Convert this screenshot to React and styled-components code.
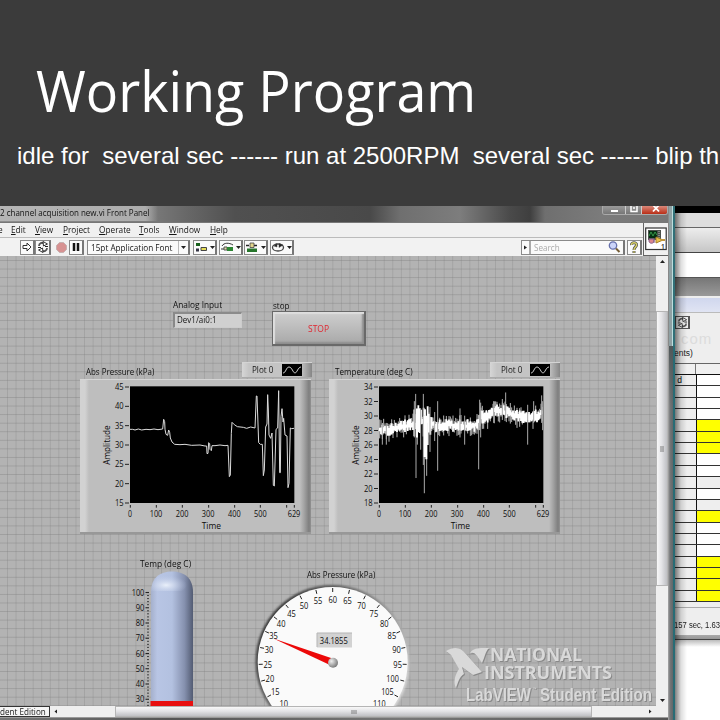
import React from "react";
import styled, { createGlobalStyle, css } from "styled-components";

const Global = createGlobalStyle`
  *, *::before, *::after { box-sizing: border-box; }
  body { margin: 0; background: #3b3b3b; font-family: "Open Sans", "Noto Sans", sans-serif; }
`;
const UI = '"Open Sans", "Noto Sans", sans-serif';

/* ---------- slide ---------- */
const Slide = styled.main`
  width: 720px; height: 720px; overflow: hidden;
  display: grid; grid-template-rows: 206px 514px;
`;
const Header = styled.header`
  background: #3b3b3b; color: #fff; padding: 51px 0 0 17px; overflow: hidden;
`;
const Title = styled.h1`
  margin: 0 0 0 19px; font: 400 57px/78px "Open Sans", sans-serif;
  width: max-content; transform: scaleX(0.945); transform-origin: left;
`;
const Subtitle = styled.p`
  margin: 12px 0 0; font: 24px/30px "Liberation Sans", Arial, sans-serif; white-space: pre; letter-spacing: -0.01px;
`;
const Desktop = styled.section`
  display: grid; grid-template-columns: 675px 45px; background: #fff; min-width: 0;
`;

/* ---------- window frame ---------- */
const Window = styled.section`
  display: grid; grid-template: 17px 33px 450px 11px 3px / 656px 12px 7px; color: #161616; overflow: hidden;
`;
const TitleBar = styled.div`
  grid-column: 1 / 3; display: flex; justify-content: space-between; overflow: hidden;
  background: linear-gradient(90deg, #8d8d8d 0, #7b7b7b 150px, #666 190px, #505050 235px, #494949 370px, #6f6f6f 400px, #7d7d7d 460px, #4a4a4a 510px, #3f3f3f 530px, #6f6f6f 545px, #7b7b7b 600px, #777);
  border-bottom: 1px solid #777;
`;
const Squeeze = styled.span`
  display: inline-block; white-space: pre; transform: scaleX(${(p) => p.$x || 0.88}); transform-origin: left;
`;
const WinTitle = styled.div`
  width: 158px; height: 15px; white-space: nowrap; font: 9px/14px ${UI}; color: #111;
  background: linear-gradient(90deg, #b5b5b5, #acacac 92%, transparent);
`;
const Captions = styled.div`
  display: grid; grid-template-columns: 23px 16px 29px; width: 66px; height: 9px; margin-right: 0;
  border: 1px solid #aaa; border-top: 0; border-radius: 0 0 3px 3px; overflow: hidden;
`;
const Caption = styled.span`
  display: flex; justify-content: center; align-items: flex-start; border-right: 1px solid #ccc;
  background: ${(p) => (p.$close ? "linear-gradient(#d9887a, #b92d16)" : "linear-gradient(#9a9a9a, #777)")};
`;
const FrameRight = styled.div`
  grid-column: 3; grid-row: 1 / 6;
  background:
    linear-gradient(90deg, #888 1px, #8ea0a3 1px 4px, #bdd 4px 5px, #306f77 5px) 0 0 / 100% 140px no-repeat,
    linear-gradient(transparent 140px, #50585a 140px, transparent 200px) 1px 0 / 4px 100% no-repeat,
    linear-gradient(90deg, #a8a8a8 0, #747678 2px, #5f6668 5px, #286c75 5px);
`;
const FrameBottom = styled.div`
  grid-column: 1 / 3; grid-row: 5; background: linear-gradient(90deg, #777, #555 25%, #777 60%, #555);
  border-top: 1px solid #999;
`;
const Bars = styled.div`
  grid-column: 1 / 3; display: grid; grid-template-columns: 643px 25px; grid-template-rows: 15px 18px;
  background: #f0f0f0; border-bottom: 1px solid #626262;
`;
const MenuBar = styled.nav`
  display: grid; grid-template-columns: 11px 24px 28px 36px 40px 30px 41px 40px; font: 9px/14px ${UI};
  border-bottom: 1px solid #bbb; overflow: hidden;
`;
const MenuItem = styled.span`white-space: nowrap; margin-left: ${(p) => (p.$first ? -2 : 0)}px;`;
const ToolBar = styled.div`
  grid-row: 2; display: flex; align-items: center; padding-left: 20px; background: #f2f2f2;
`;
const Tool = styled.div`
  flex: none; height: 15px; width: ${(p) => p.$w}px; margin-left: ${(p) => p.$gap || 0}px;
  display: flex; align-items: center; justify-content: center; gap: 2px; overflow: hidden;
  ${(p) => !p.$flat && css`border: 1px solid #8a8a8a; border-right: 2px solid #777; background: #fafafa;`}
  ${(p) => p.$start && css`justify-content: flex-start; padding-left: 3px;`}
  font: 9px/13px ${UI};
`;
const FontName = styled.span`width: 88px; height: 13px; border-right: 1px solid #bbb; flex: none;`;
const SearchKnob = styled.span`width: 7px; height: 13px; border-right: 2px solid #aaa; display: flex; align-items: center; flex: none; margin-left: -1px;`;
const SearchText = styled.span`color: #aaa; width: 73px; flex: none; padding-left: 1px;`;
const ViIcon = styled.div`
  grid-column: 2; grid-row: 1 / 3; border-left: 1px solid #666; padding: 4px 1px 4px 1px;
`;

/* ---------- scroll bars ---------- */
const VScroll = styled.div`
  grid-column: 2; grid-row: 3; background: #efefef; display: grid; grid-template-rows: 55px 275px 1fr;
  justify-items: center;
`;
const HScroll = styled.div`
  grid-column: 1 / 3; grid-row: 4; background: #efefef; display: grid; overflow: hidden;
  grid-template-columns: 50px 65px 477px 1fr; align-items: center;
`;
const Thumb = styled.div`
  width: 100%; height: 100%; border: 1px solid #b5b5b5; display: flex; justify-content: center; align-items: center;
  background: linear-gradient(${(p) => (p.$v ? "90deg" : "180deg")}, #f8f8f8, #e4e4e7 45%, #bfc0c4);
`;
const Edition = styled.div`
  height: 11px; border: 1px solid #333; border-left: 0; background: #f5f5f5; font: 9px/9px ${UI}; overflow: hidden; white-space: nowrap;
`;
const ArrowSlot = styled.div`
  display: flex; width: 100%; height: 100%; padding: ${(p) => p.$pad || "0"};
  justify-content: ${(p) => p.$j || "center"}; align-items: ${(p) => p.$a || "center"};
`;

/* ---------- front panel: controls are placed freely on its canvas ---------- */
const Panel = styled.div`
  grid-column: 1; grid-row: 3; position: relative; overflow: hidden;
  background-color: #b3b3b3;
  background-image: linear-gradient(90deg, rgba(130,130,130,.32) 1px, transparent 1px),
    linear-gradient(rgba(125,125,125,.38) 1px, transparent 1px);
  background-size: 8.57px 8.57px; background-position: 7px 4px;
`;
const Placed = styled.div`
  position: absolute; left: ${(p) => p.$l}px; top: ${(p) => p.$t}px;
`;
const Label = styled(Placed)`
  font: 9px/12px ${UI}; white-space: nowrap; color: #111;
`;
const Field = styled(Placed)`
  width: 69px; height: 16px; background: #d0d0d0; font: 9px/12px ${UI}; padding: 0 0 0 2px;
  border: 1px solid #999; border-top: 2px solid #8b8b8b; border-left: 2px solid #888; border-bottom-color: #ccc; border-right-color: #ccc;
`;
const StopButton = styled.button`
  position: absolute; left: 272px; top: 55px; width: 94px; height: 35px; padding: 2px 0 0 2px;
  border: 1px solid #696969; border-right-width: 2px; border-bottom-width: 2px; color: #e02630;
  background: linear-gradient(#cfcfcf, #b4b4b4 70%, #a8a8a8);
  box-shadow: inset 2px 2px 1px #dedede, inset -2px -2px 2px #8d8d8d; font: 9px/12px ${UI};
`;
const Legend = styled(Placed)`
  width: 70px; height: 16px; display: flex; align-items: center; justify-content: flex-end; gap: 6px; padding-right: 10px;
  background: linear-gradient(90deg, #d6d6d6, #c4c4c4 10%, #c4c4c4 84%, #868686); font: 9px/12px ${UI};
  border-top: 1px solid #d4d4d4; border-bottom: 1px solid #aaa;
`;
const Graph = styled(Placed)`
  width: 231px; height: 155px;
  background: linear-gradient(90deg, #d2d2d2, #d2d2d2 5px, #bebebe 9px, #bebebe 220px, #a4a4a4 224px, #7e7e7e 229px, #929292);
  border-top: 1px solid #d5d5d5; border-bottom: 2px solid #989898;
`;
const Art = styled.svg`display: block; flex: none; overflow: hidden; font-family: ${UI};`;

const T = ({ x, y, w, s = 26, children, ...r }) => (
  <text x={x} y={y} fontSize={s} textAnchor="middle" textLength={w} lengthAdjust="spacingAndGlyphs" fill="#0c0c0c" fontWeight="500" {...r}>{children}</text>
);

/* pressure trace, in plot units (0..492 across, 0..348 down) */
const pressure = "0,128 8,128 15,130 25,127 35,130 48,128 60,129 72,127 84,129 98,127 101,98 104,105 105,128 108,143 113,146 116,130 119,137 121,154 126,166 134,173 150,174 165,173 185,176 210,175 225,178 230,178 231,201 234,200 236,168 239,171 240,188 244,192 246,177 255,177 270,175 285,177 294,176 298,270 301,265 304,140 306,107 313,114 322,120 340,122 350,125 362,121 375,124 379,28 381,28 386,168 391,173 397,173 400,267 403,250 407,121 411,112 413,24 415,70 417,145 422,155 426,139 430,296 433,298 438,128 443,124 446,12 449,258 451,258 453,90 456,66 459,106 461,95 465,145 471,148 474,303 477,290 481,124 485,126 492,125";

/* temperature trace: a noisy band with occasional long spikes */
const centre = [[0, 28.2], [30, 28.1], [60, 28.5], [90, 28.6], [105, 29], [110, 29.6], [155, 29], [175, 28.5], [200, 28.8], [250, 28.5], [297, 28.7], [306, 29.8], [330, 30], [348, 30.8], [375, 30.6], [410, 30], [450, 29.6], [480, 30.1], [492, 30.5]];
const at = (x) => {
  let i = 1;
  while (i < centre.length - 1 && centre[i][0] < x) i += 1;
  const [a, b] = [centre[i - 1], centre[i]];
  return a[1] + ((b[1] - a[1]) * (x - a[0])) / (b[0] - a[0]);
};
const vy = (v) => 348 - (v - 18) * 21.75;
function band() {
  let seed = 17;
  const rnd = () => ((seed = (seed * 16807) % 2147483647) / 2147483647);
  let core = "", thin = "";
  for (let x = 2; x < 491; x += 4) {
    const c = at(x);
    const burst = (x > 105 && x < 127) ? [1.7, 1.7] : (x > 130 && x < 162) ? [1.9, 2.2] : [0.62, 0.62];
    core += `M${x} ${vy(c + burst[0] * (0.25 + rnd() * 1.25))}V${vy(c - burst[1] * (0.25 + rnd() * 1.25))}`;
    const up = rnd() ** 2, down = rnd() ** 2;
    thin += `M${x} ${vy(c + 0.5 + up * 1.1)}V${vy(c - 0.5 - down * 1.3)}`;
  }
  return { core, thin };
}
const temp = band();
const spikes = [[10, 29, 26], [22, 29, 26], [106, 32, 27], [110, 33, 29], [111, 29, 21.4], [115, 31, 26], [125, 31, 25.3], [133, 33, 23.2], [136, 30, 19.3], [143, 29, 21.7], [153, 31.2, 25], [167, 30.5, 26.5], [176, 32, 22.4], [243, 31, 27], [257, 30, 26], [299, 29, 22.6], [302, 32.2, 28], [305, 31.8, 27], [344, 32, 29], [370, 32.3, 30], [380, 33.2, 30], [446, 31.5, 26], [464, 32, 29], [488, 32.8, 29], [491, 32, 28]];

function Plot({ yTicks, children }) {
  const step = 348 / (yTicks.length - 1);
  return (
    <Art width="231" height="152" viewBox="30 75 693 456">
      <rect x="180" y="94" width="493" height="350" fill="#000" />
      <svg x="180" y="95" width="492" height="348" viewBox="0 0 492 348">{children}</svg>
      {yTicks.map((v, i) => (
        <g key={v}>
          <path d={`M165 ${96 + i * step}h12`} stroke="#222" strokeWidth="3" />
          <T x={148} y={105 + i * step} w={26}>{v}</T>
        </g>
      ))}
      {[0, 78, 156, 235, 313, 390, 469, 492].map((x) => (
        <path key={x} d={`M${181 + x} 450v8`} stroke="#222" strokeWidth="3" />
      ))}
      <T x={180} y={485} w={12}>0</T>
      {[100, 200, 300, 400, 500].map((v, i) => <T key={v} x={258 + i * 78.3} y={485} w={38}>{v}</T>)}
      <T x={672} y={485} w={38}>629</T>
      <T x={424} y={521} w={58}>Time</T>
      <T x={0} y={0} w={118} transform="translate(119 270) rotate(-90)">Amplitude</T>
    </Art>
  );
}

function PlotLegend({ l }) {
  return (
    <Legend $l={l} $t={106}>
      <Squeeze $x={0.9}>Plot 0</Squeeze>
      <Art width="20" height="12" viewBox="0 0 20 12">
        <rect width="20" height="12" fill="#000" />
        <path d="M1 9C4 9 4 3 7 3S11 9 13 9S16 3 19 3" fill="none" stroke="#ccc" />
      </Art>
    </Legend>
  );
}

function Thermometer() {
  return (
    <Art width="70" height="142" viewBox="130 564 70 142">
      <defs>
        <linearGradient id="tube"><stop offset="0" stopColor="#a5b0cc" /><stop offset=".15" stopColor="#b8c5e4" /><stop offset=".5" stopColor="#b3c1e0" /><stop offset=".8" stopColor="#8590ae" /><stop offset="1" stopColor="#525b72" /></linearGradient>
        <radialGradient id="dome" cx=".36" cy=".7" r=".5"><stop offset="0" stopColor="#eaf0fa" /><stop offset="1" stopColor="#c0cce8" stopOpacity="0" /></radialGradient>
      </defs>
      <path d="M151 706V592C151 578 160 571.500 172 571.500S193 578 193 592V706Z" fill="url(#tube)" />
      <path d="M151 591C151 578 160 571.500 172 571.500S193 578 193 591Z" fill="url(#dome)" />
      <rect x="150.500" y="701" width="42.500" height="5" fill="#e80f0f" />
      {[100, 90, 80, 70, 60, 50, 40, 30].map((v, i) => (
        <T key={v} s={8.6} x={v === 100 ? 138 : 140} y={595.5 + i * 15.25} w={v === 100 ? 12.5 : 8.6}>{v}</T>
      ))}
      {Array.from({ length: 38 }, (_, i) => (
        <path key={i} d={`M${i % 5 ? 147 : 145.5} ${592.5 + i * 3.05}H149`} stroke="#222" strokeWidth={i % 5 ? 0.8 : 1.1} />
      ))}
    </Art>
  );
}

function Gauge() {
  const values = Array.from({ length: 23 }, (_, i) => 5 + i * 5);
  return (
    <Art width="170" height="132" viewBox="248 574 170 132">
      <defs>
        <linearGradient id="rim" x1="0" y1=".1" x2="1" y2=".75"><stop offset="0" stopColor="#222" /><stop offset=".45" stopColor="#777" /><stop offset=".75" stopColor="#aaa" /><stop offset="1" stopColor="#e8e8e8" /></linearGradient>
        <filter id="soft"><feGaussianBlur stdDeviation=".8" /></filter>
        <radialGradient id="hub" cx=".35" cy=".35" r=".7"><stop offset="0" stopColor="#eee" /><stop offset="1" stopColor="#777" /></radialGradient>
      </defs>
      <circle cx="332.500" cy="662" r="77" fill="url(#rim)" filter="url(#soft)" />
      <circle cx="332.700" cy="662" r="75" fill="#fafafa" />
      {values.map((v) => {
        const a = (((v - 60) / 5) * 13.12 * Math.PI) / 180;
        const s = Math.sin(a), c = Math.cos(a);
        return (
          <g key={v}>
            <path d={`M${332.7 + s * 74} ${662 - c * 74}L${332.7 + s * 70} ${662 - c * 70}`} stroke="#222" />
            <T s={8.8} x={332.7 + s * (v > 99 ? 62 : 65)} y={665.5 - c * 63} w={v > 99 ? 12.5 : v < 10 ? 4 : 8.6}>{v}</T>
          </g>
        );
      })}
      <rect x="317" y="633" width="35" height="14.500" fill="#d2d2d2" />
      <path d="M317 647V633H352" stroke="#b5b5b5" fill="none" />
      <T s={9} x={333.8} y={644.3} w={28}>34.1855</T>
      <path d="M273.500 638.500L334 659L331 665.500Z" fill="#ec0808" />
      <circle cx="333" cy="662.700" r="5" fill="url(#hub)" />
    </Art>
  );
}

function NiLogo() {
  return (
    <Art width="209" height="60" viewBox="0 -1 209 60" fill="#d9d9d9">
      <g filter="drop-shadow(1px 1px 0.5px #888)">
        <path d="M0 4C8-1 15 0 20 7L36 25 27 28 16 20 18 27C13 30 12 36 10 41C7 35 9 28 13 22L5 8Z" />
        <path d="M24 6C28 0 35 1 43 1C39 5 39 10 36 16L31 9C29 6 27 5 24 6Z" />
        <text x="44" y="13.500" fontSize="17.500" fontWeight="700" textLength="92" lengthAdjust="spacingAndGlyphs">NATIONAL</text>
        <text x="38" y="31.500" fontSize="17.500" fontWeight="700" textLength="128" lengthAdjust="spacingAndGlyphs">INSTRUMENTS</text>
        <g fontFamily="Liberation Sans, sans-serif" fontWeight="700">
          <text x="20" y="53.500" fontSize="19" textLength="65" lengthAdjust="spacingAndGlyphs">LabVIEW</text>
          <text x="87" y="42.500" fontSize="3.500">™</text>
          <text x="94" y="53.500" fontSize="19" textLength="112" lengthAdjust="spacingAndGlyphs">Student Edition</text>
        </g>
      </g>
    </Art>
  );
}

const Arrow = ({ d = "M0 0H5L2.500 3Z" }) => <Art width="5" height="5" viewBox="0 -1 5 5"><path d={d} fill="#222" /></Art>;
const Grip = ({ v }) => <Art width="6" height="6" viewBox="0 0 6 6"><path d={v ? "M1 1H5M1 3H5M1 5H5" : "M1 1V5M3 1V5M5 1V5"} stroke="#666" strokeWidth=".8" /></Art>;
const Loop = ({ s = 12 }) => (
  <Art width={s} height={s} viewBox="0 0 12 12" fill="none" stroke="#222">
    <path d="M2 5C2 2 5 1 7 2.500M10 7C10 10 7 11 5 9.500" strokeWidth="1.800" stroke="#555" />
    <path d="M6 .5L10.500 3 6.500 5ZM6 11.500L1.500 9 5.500 7Z" fill="#fff" strokeWidth=".9" />
    <path d="M1 6.500H4M8 5.500H11" strokeWidth="1" />
  </Art>
);
const toolArt = [
  <g key="a"><path d="M2 2H6V5H2Z" fill="#175f1c" /><path d="M2 7.500H5V10.500H2Z" fill="#334" /><path d="M7 6.500H12.500V9.500H7Z" fill="#e5dc55" stroke="#444" /></g>,
  <g key="b"><path d="M2 5C4 1.500 9 1.500 13 4M1 8H4" stroke="#333" fill="none" /><path d="M4 6H7V9H4Z" fill="#ddd8a0" stroke="#555" /><path d="M7 6H13V10H7Z" fill="#2d8633" /></g>,
  <g key="c"><path d="M1 4.500H12" stroke="#222" strokeWidth="1.600" strokeDasharray="3 1" /><path d="M5 2H9V6.500H5Z" fill="#e2d58c" stroke="#444" strokeWidth=".8" /><path d="M2 7.500H12V11H2Z" fill="#26752b" /></g>,
  <g key="d" fill="none" stroke="#444"><ellipse cx="7" cy="6.500" rx="5.500" ry="3.500" strokeWidth="1.300" /><path d="M3 5L6 2.500V6ZM8 2.500L12 4 8 6.500Z" fill="#222" strokeWidth=".5" /></g>,
];

/* ---------- partly covered window at the right ---------- */
const Back = styled.aside`
  display: grid; grid-template-rows: 7px 15px 24px 1px 24px 1px 18px 2px 14px 51px 12px 227px 5px 28px 5px 80px;
  overflow: hidden; position: relative;
  &::after { content: ""; position: absolute; inset: 0; background: linear-gradient(90deg, rgba(0,0,0,.5), rgba(0,0,0,.13) 6px, transparent 12px); }
`;
const Strip = styled.div`background: ${(p) => p.$bg}; ${(p) => p.$line && css`border-bottom: 1px solid #666;`}`;
const Settings = styled.div`
  background: #eeeeee; padding: 3px 0 0 0; border-top: 1px solid #bbb; overflow: hidden;
`;
const IconBox = styled.div`width: 15px; height: 13px; border: 1px solid #555; border-right-width: 2px; padding-left: 1px; overflow: hidden;`;
const Ghost = styled.div`font: 15px/19px "Liberation Sans", sans-serif; color: #dcdcdc; letter-spacing: 1px; padding-left: 6px;`;
const Crop = styled.div`
  font: 8.500px/10px "Liberation Sans", sans-serif; white-space: nowrap; color: #222; margin-left: -1px;
  padding-top: ${(p) => p.$y || 0}px;
`;
const HeadRow = styled.div`display: grid; grid-template-columns: 21px 1fr; background: #f0f0f0; border-top: 1px solid #666; border-bottom: 1px solid #111;`;
const HeadCell = styled.div`border-right: 1px solid #777;`;
const Table = styled.div`display: grid; grid-template-rows: repeat(20, 1fr);`;
const Row = styled.div`display: grid; grid-template-columns: 22px 1fr; border-bottom: 1px solid #333; overflow: hidden;`;
const Cell = styled.div`background: ${(p) => p.$bg}; ${(p) => p.$name && css`border-right: 1px solid #111;`} font: 8.500px/10px "Liberation Sans", sans-serif;`;
const Status = styled.div`background: #eee; border-top: 1px solid #aaa; overflow: hidden;`;
const yellow = new Set([4, 5, 6, 12, 16, 17, 18, 19]);

const menus = [["e", ""], ["E", "dit"], ["V", "iew"], ["P", "roject"], ["O", "perate"], ["T", "ools"], ["W", "indow"], ["H", "elp"]];

export default function App() {
  return (
    <Slide>
      <Global />
      <Header>
        <Title>Working Program</Title>
        <Subtitle>{"idle for  several sec ------ run at 2500RPM  several sec ------ blip th"}</Subtitle>
      </Header>
      <Desktop>
        <Window>
          <TitleBar>
            <WinTitle><Squeeze $x={0.89}>2 channel acquisition new.vi Front Panel</Squeeze></WinTitle>
            <Captions>
              <Caption><Art width="9" height="8" viewBox="0 0 9 8"><path d="M1 5H8" stroke="#fff" strokeWidth="2" /></Art></Caption>
              <Caption><Art width="8" height="8" viewBox="0 0 8 8"><path d="M1 0V5.500H7V0M3 2H5" fill="none" stroke="#fff" strokeWidth="1.500" /></Art></Caption>
              <Caption $close><Art width="8" height="8" viewBox="0 0 8 8"><path d="M1 -1L7 5.500M7 -1L1 5.500" stroke="#fff" strokeWidth="1.800" /></Art></Caption>
            </Captions>
          </TitleBar>
          <Bars>
            <MenuBar>
              {menus.map(([k, rest], i) => <MenuItem key={k} $first={!i}><Squeeze $x={0.92}>{i ? <u>{k}</u> : k}{rest}</Squeeze></MenuItem>)}
            </MenuBar>
            <ToolBar>
              <Tool $w={15}><Art width="10" height="10" viewBox="0 0 10 10"><path d="M1 3.500H5V1L9 5 5 9V6.500H1Z" fill="#fff" stroke="#333" /></Art></Tool>
              <Tool $w={16}><Loop /></Tool>
              <Tool $w={14} $gap={3} $flat><Art width="11" height="11" viewBox="0 0 11 11"><path d="M3.500 .5H7.500L10.500 3.500V7.500L7.500 10.500H3.500L.5 7.500V3.500Z" fill="#d79292" stroke="#c6b0b0" /></Art></Tool>
              <Tool $w={15} $gap={1}><Art width="8" height="9" viewBox="0 0 8 9"><path d="M2 0V8M6 0V8" stroke="#111" strokeWidth="2.500" /></Art></Tool>
              <Tool $w={103} $gap={3} $start><FontName><Squeeze $x={0.91}>15pt Application Font</Squeeze></FontName><Arrow /></Tool>
              {toolArt.map((art, i) => (
                <Tool key={i} $w={24} $gap={[3, 2, 1, 2][i]}><Art width="14" height="13" viewBox="0 0 14 13">{art}</Art><Arrow /></Tool>
              ))}
              <Tool $w={104} $gap={227} $start>
                <SearchKnob><Art width="5" height="5" viewBox="0 0 5 5"><path d="M0 0.500L3 2.500 0 4.500Z" fill="#222" /></Art></SearchKnob>
                <SearchText><Squeeze $x={0.9}>Search</Squeeze></SearchText>
                <Art width="13" height="12" viewBox="0 0 13 12"><circle cx="5" cy="4.500" r="3.700" fill="#cbd4fa" stroke="#6670ad" strokeWidth="1.300" /><path d="M8 7.500L11.500 11" stroke="#755d36" strokeWidth="2" /></Art>
              </Tool>
              <Tool $w={15} $gap={2}><Art width="10" height="13" viewBox="0 0 10 13"><path d="M2.500 4C2 1 8 1 7.500 4C7.500 6 5 6 5 9M5 10V12" fill="none" stroke="#555" strokeWidth="3" /><path d="M2.500 4C2 1 8 1 7.500 4C7.500 6 5 6 5 9M5 10.300V11.700" fill="none" stroke="#dcd465" strokeWidth="1.400" /></Art></Tool>
            </ToolBar>
            <ViIcon>
              <Art width="22" height="24" viewBox="0 0 22 24">
                <rect x=".7" y="1" width="20.500" height="21.500" fill="#fff" stroke="#333" strokeWidth="1.200" />
                <rect x="3" y="3" width="13" height="10" fill="#4b514b" /><rect x="4" y="4" width="8" height="7" fill="#052e11" />
                <path d="M4 9L6 5 8 9 10 5 12 8" fill="none" stroke="#359447" /><path d="M14 4V12" stroke="#bbb" strokeDasharray="1 1" />
                <path d="M4 12H9V14C9 17 4 17 4 14ZM9 12V16" fill="#dc858b" stroke="#85608b" /><path d="M11 10L18 13 11 16Z" fill="#e9c24b" stroke="#a77d27" />
                <path d="M16 13H20" stroke="#c0963b" strokeWidth="2" /><text x="16" y="21.500" fontSize="6.500" fontWeight="600" fill="#222">1</text>
              </Art>
            </ViIcon>
          </Bars>
          <Panel>
            <Label $l={173} $t={43}><Squeeze $x={0.92}>Analog Input</Squeeze></Label>
            <Field $l={173} $t={56}><Squeeze $x={0.89}>Dev1/ai0:1</Squeeze></Field>
            <Label $l={273} $t={44}><Squeeze $x={0.9}>stop</Squeeze></Label>
            <StopButton><Squeeze $x={0.94}>STOP</Squeeze></StopButton>
            <Label $l={85.5} $t={110}><Squeeze $x={0.88}>Abs Pressure (kPa)</Squeeze></Label>
            <PlotLegend l={241.5} />
            <Graph $l={80} $t={123}>
              <Plot yTicks={[45, 40, 35, 30, 25, 20, 15]}>
                <polyline points={pressure} fill="none" stroke="#dcdcdc" strokeWidth="3" strokeLinejoin="round" />
              </Plot>
            </Graph>
            <Label $l={334.5} $t={110}><Squeeze $x={0.9}>Temperature (deg C)</Squeeze></Label>
            <PlotLegend l={490.4} />
            <Graph $l={329} $t={123}>
              <Plot yTicks={[34, 32, 30, 28, 26, 24, 22, 20, 18]}>
                <path d={temp.thin} stroke="#b5b5b5" strokeWidth="3" />
                <path d={temp.core} stroke="#fff" strokeWidth="5.500" />
                <path d={spikes.map(([x, a, b]) => `M${x} ${vy(a)}V${vy(b)}`).join("")} stroke="#aaa" strokeWidth="3" />
                <path d={`M137 ${vy(30)}V${vy(24.3)}M142 ${vy(30)}V${vy(24)}M114 ${vy(31)}V${vy(27)}`} stroke="#fff" strokeWidth="6" />
              </Plot>
            </Graph>
            <Label $l={139.5} $t={302}><Squeeze $x={0.93}>Temp (deg C)</Squeeze></Label>
            <Placed $l={130} $t={308}><Thermometer /></Placed>
            <Placed $l={248} $t={318}><Gauge /></Placed>
            <Label $l={306.5} $t={313}><Squeeze $x={0.88}>Abs Pressure (kPa)</Squeeze></Label>
            <Placed $l={446} $t={390}><NiLogo /></Placed>
          </Panel>
          <VScroll>
            <ArrowSlot $a="flex-start" $pad="3px 0 0"><Arrow d="M0 3L2.500 0 5 3Z" /></ArrowSlot>
            <Thumb $v><Grip v /></Thumb>
            <ArrowSlot $a="flex-end" $pad="0 0 3px"><Arrow /></ArrowSlot>
          </VScroll>
          <HScroll>
            <Edition><Squeeze $x={0.9}>dent Edition</Squeeze></Edition>
            <ArrowSlot $j="flex-start" $pad="0 0 0 3px"><Arrow d="M4 -0.500V3.500L1.500 1.500Z" /></ArrowSlot>
            <Thumb><Grip /></Thumb>
            <ArrowSlot $j="flex-end" $pad="0 15px 0 0"><Arrow d="M1 -0.500V3.500L3.500 1.500Z" /></ArrowSlot>
          </HScroll>
          <FrameBottom />
          <FrameRight />
        </Window>
        <Back>
          <Strip $bg="#000" />
          <Strip $bg="#dedede" $line />
          <Strip $bg="linear-gradient(#ededed,#c6c6c6)" />
          <Strip $bg="#444" />
          <Strip $bg="#fff" />
          <Strip $bg="#555" />
          <Strip $bg="linear-gradient(#777,#999)" />
          <Strip $bg="#eee" />
          <Strip $bg="linear-gradient(#d0d7ee,#e0e4f3)" />
          <Settings>
            <IconBox><Loop s={11} /></IconBox>
            <Ghost>com</Ghost>
            <Crop>ents)</Crop>
          </Settings>
          <HeadRow><HeadCell /></HeadRow>
          <Table>
            {Array.from({ length: 20 }, (_, i) => (
              <Row key={i}>
                <Cell $name $bg="#eee">{i === 0 ? "\u00a0d" : ""}</Cell>
                <Cell $bg={yellow.has(i) ? "#ff0" : i === 9 || i === 11 ? "#eee" : "#fff"} />
              </Row>
            ))}
          </Table>
          <Strip $bg="#eee" />
          <Status><Crop $y={12}><Squeeze $x={0.9}>157 sec, 1.63</Squeeze></Crop></Status>
          <Strip $bg="linear-gradient(#aaa,#999 70%,#444 80%)" />
          <Strip $bg="linear-gradient(#bbb,#fff 7px)" />
        </Back>
      </Desktop>
    </Slide>
  );
}
